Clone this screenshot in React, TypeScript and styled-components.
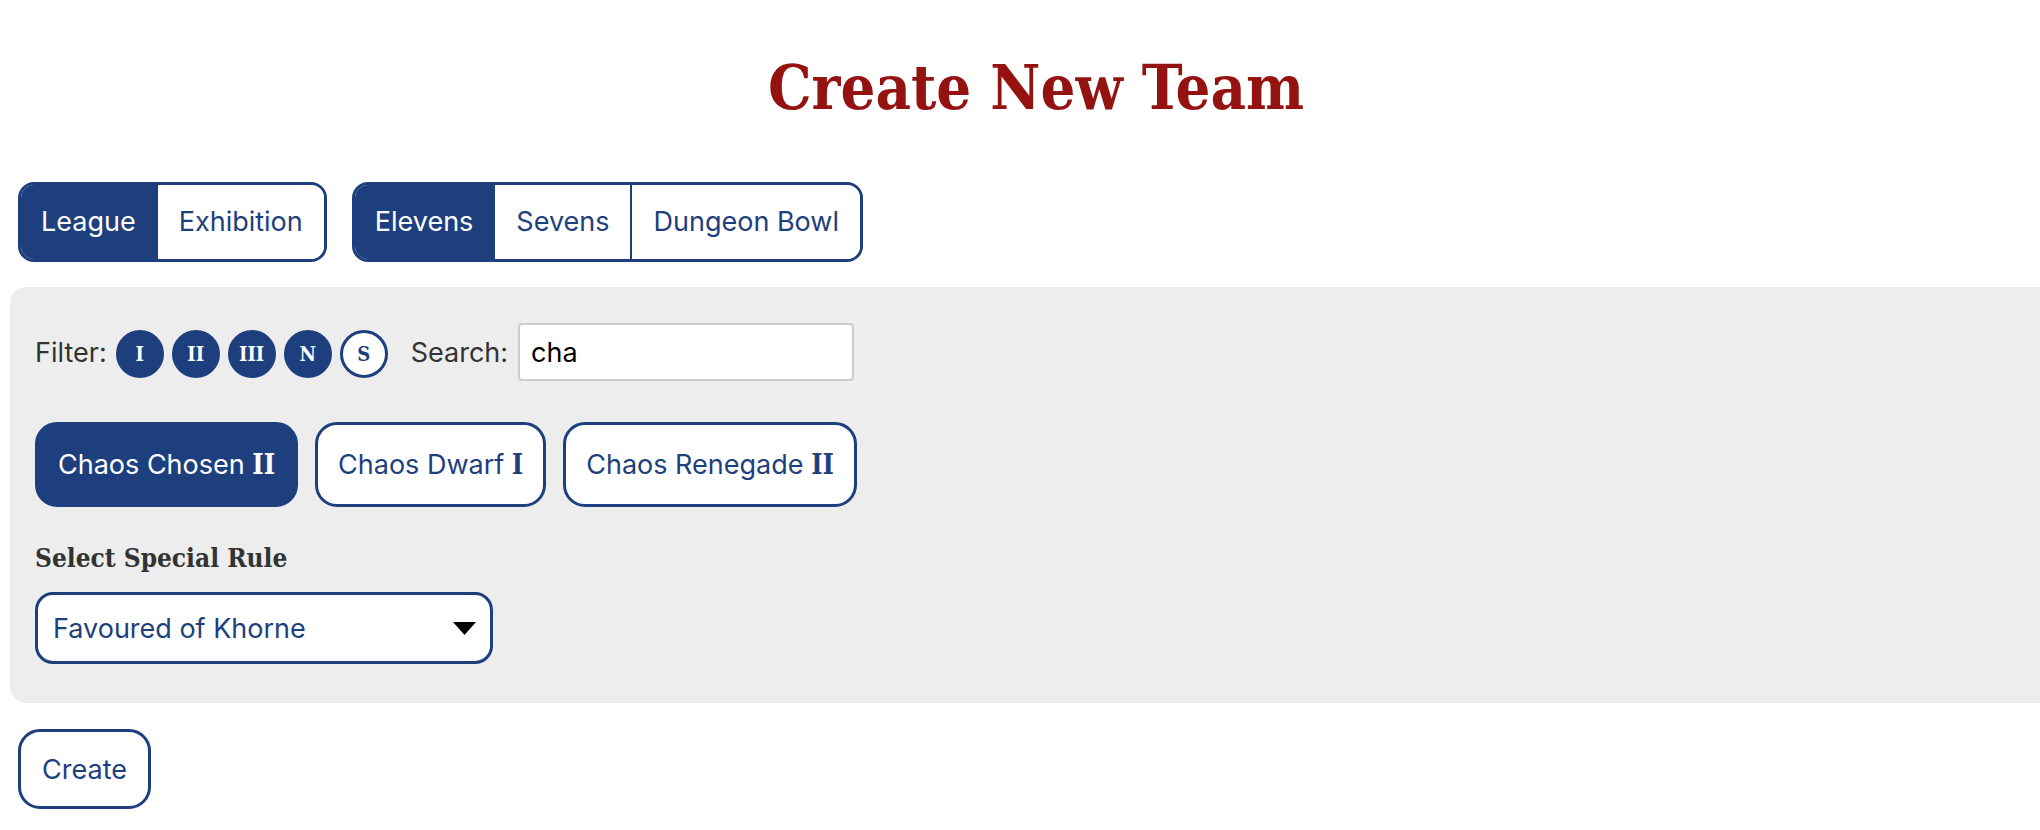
import React from "react";
import styled, { createGlobalStyle } from "styled-components";

const BLUE = "#1e3f7e";
const SLAB = `"DejaVu Serif Condensed", "DejaVu Serif", serif`;
const SANS = `Inter, "Noto Sans", "Liberation Sans", sans-serif`;

const GlobalStyle = createGlobalStyle`
  html, body { margin: 0; padding: 0; background: #ffffff; }
  body { font-family: ${SANS}; overflow: hidden; }
  * { box-sizing: border-box; }
`;

const Page = styled.div`
  padding: 1px 0 0 10px;
`;

const Title = styled.h1`
  margin: 50px 0 0 0;
  padding-left: 22px;
  text-align: center;
  font-family: ${SLAB};
  font-stretch: condensed;
  font-weight: 700;
  font-size: 61px;
  line-height: 1.2;
  color: #941210;
`;

const Toolbar = styled.div`
  display: flex;
  gap: 25px;
  margin-top: 58px;
  padding-left: 8px;
`;

const SegmentGroup = styled.div`
  display: inline-flex;
  border: 3px solid ${BLUE};
  border-radius: 16px;
  overflow: hidden;
  background: #ffffff;
`;

const Segment = styled.button<{ $active?: boolean; $first?: boolean }>`
  height: 74px;
  padding: 0 ${(p) => (p.$first ? 20 : 21)}px;
  border: none;
  border-left: ${(p) => (p.$first ? "none" : `2px solid ${BLUE}`)};
  background: ${(p) => (p.$active ? BLUE : "#ffffff")};
  color: ${(p) => (p.$active ? "#ffffff" : BLUE)};
  font-family: ${SANS};
  font-size: 27px;
  line-height: 74px;
  cursor: pointer;
`;

const Panel = styled.section`
  margin-top: 25px;
  background: #ededed;
  border-radius: 16px 0 0 16px;
  padding: 36px 25px 39px 25px;
`;

const FilterRow = styled.div`
  display: flex;
  align-items: center;
  height: 58px;
`;

const Label = styled.span<{ $gapLeft?: number; $gapRight?: number }>`
  font-family: ${SANS};
  font-size: 27px;
  color: #333333;
  margin-left: ${(p) => p.$gapLeft ?? 0}px;
  margin-right: ${(p) => p.$gapRight ?? 0}px;
`;

const TierDots = styled.div`
  display: flex;
  gap: 8px;
  margin-top: 4px;
`;

const TierDot = styled.button<{ $off?: boolean }>`
  width: 48px;
  height: 48px;
  border-radius: 50%;
  border: 3px solid ${BLUE};
  background: ${(p) => (p.$off ? "#ffffff" : BLUE)};
  color: ${(p) => (p.$off ? BLUE : "#ffffff")};
  font-family: ${SLAB};
  font-stretch: condensed;
  font-weight: 700;
  font-size: 20px;
  display: flex;
  align-items: center;
  justify-content: center;
  padding: 0;
  cursor: pointer;
`;

const SearchInput = styled.input`
  width: 336px;
  height: 58px;
  margin-left: 10px;
  border: 2px solid #cccccc;
  border-radius: 4px;
  background: #ffffff;
  padding: 0 11px;
  font-family: ${SANS};
  font-size: 27px;
  color: #000000;
  outline: none;
`;

const TeamRow = styled.div`
  display: flex;
  gap: 17px;
  margin-top: 41px;
`;

const TeamButton = styled.button<{ $active?: boolean }>`
  height: 85px;
  padding: 0 20px;
  border: 3px solid ${BLUE};
  border-radius: 22px;
  background: ${(p) => (p.$active ? BLUE : "#ffffff")};
  color: ${(p) => (p.$active ? "#ffffff" : BLUE)};
  font-family: ${SANS};
  font-size: 27px;
  cursor: pointer;
  white-space: nowrap;
`;

const Tier = styled.span`
  font-family: ${SLAB};
  font-stretch: condensed;
  font-weight: 700;
`;

const SectionLabel = styled.div`
  margin-top: 36px;
  font-family: ${SLAB};
  font-stretch: condensed;
  font-weight: 700;
  font-size: 26px;
  line-height: 1.2;
  color: #333333;
`;

const SelectBox = styled.button`
  margin-top: 18px;
  width: 458px;
  height: 72px;
  display: flex;
  align-items: center;
  justify-content: space-between;
  padding: 0 14px 0 15px;
  border: 3px solid ${BLUE};
  border-radius: 18px;
  background: #ffffff;
  color: ${BLUE};
  font-family: ${SANS};
  font-size: 27px;
  cursor: pointer;
`;

const Footer = styled.div`
  margin-top: 26px;
  padding-left: 8px;
`;

const CreateButton = styled.button`
  width: 133px;
  height: 80px;
  border: 3px solid ${BLUE};
  border-radius: 22px;
  background: #ffffff;
  color: ${BLUE};
  font-family: ${SANS};
  font-size: 27px;
  cursor: pointer;
`;

const Caret = () => (
  <svg width="23" height="13" viewBox="0 0 23 13" aria-hidden="true">
    <polygon points="0,0 23,0 11.5,13" fill="#000000" />
  </svg>
);

const tiers = [
  { key: "I", off: false },
  { key: "II", off: false },
  { key: "III", off: false },
  { key: "N", off: false },
  { key: "S", off: true },
];

const teams = [
  { name: "Chaos Chosen", tier: "II", active: true },
  { name: "Chaos Dwarf", tier: "I", active: false },
  { name: "Chaos Renegade", tier: "II", active: false },
];

export default function App() {
  return (
    <>
      <GlobalStyle />
      <Page>
        <Title>Create New Team</Title>
        <Toolbar>
          <SegmentGroup>
            <Segment $first $active>League</Segment>
            <Segment>Exhibition</Segment>
          </SegmentGroup>
          <SegmentGroup>
            <Segment $first $active>Elevens</Segment>
            <Segment>Sevens</Segment>
            <Segment>Dungeon Bowl</Segment>
          </SegmentGroup>
        </Toolbar>
        <Panel>
          <FilterRow>
            <Label $gapRight={9}>Filter:</Label>
            <TierDots>
              {tiers.map((t) => (
                <TierDot key={t.key} $off={t.off}>
                  {t.key}
                </TierDot>
              ))}
            </TierDots>
            <Label $gapLeft={23}>Search:</Label>
            <SearchInput defaultValue="cha" />
          </FilterRow>
          <TeamRow>
            {teams.map((t) => (
              <TeamButton key={t.name} $active={t.active}>
                {t.name} <Tier>{t.tier}</Tier>
              </TeamButton>
            ))}
          </TeamRow>
          <SectionLabel>Select Special Rule</SectionLabel>
          <SelectBox>
            <span>Favoured of Khorne</span>
            <Caret />
          </SelectBox>
        </Panel>
        <Footer>
          <CreateButton>Create</CreateButton>
        </Footer>
      </Page>
    </>
  );
}
